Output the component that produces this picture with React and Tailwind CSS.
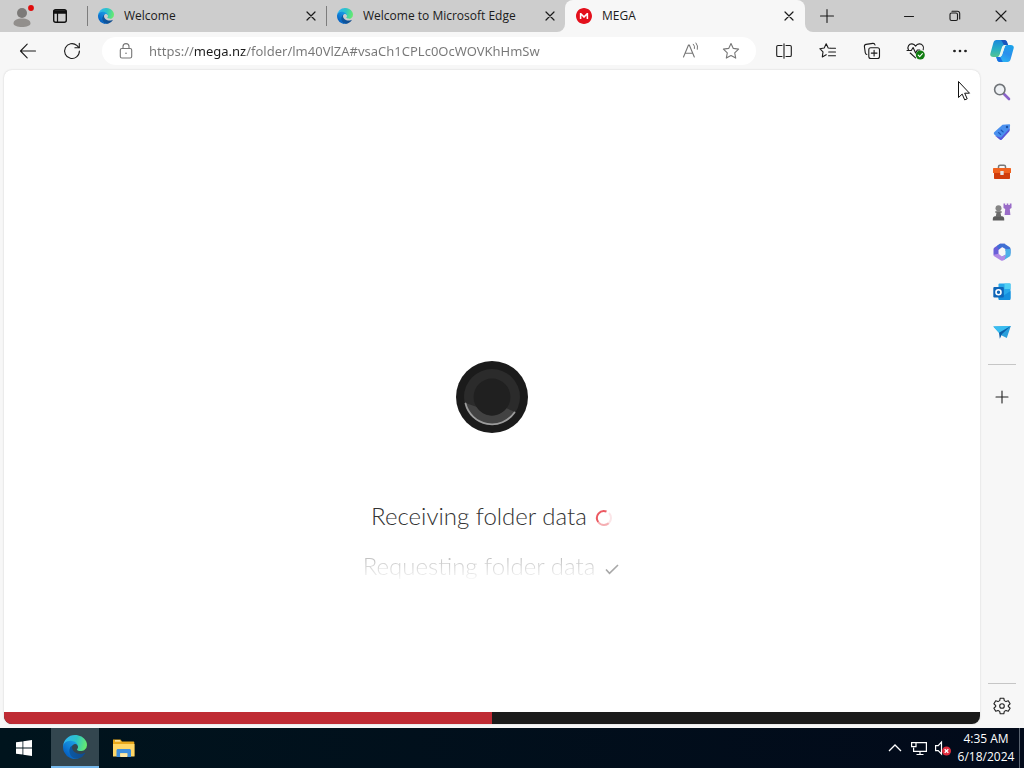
import React from "react";
import { SiMega } from "react-icons/si";

function Icon({ size = "size-5", children, className = "" }) {
  return (
    <svg
      viewBox="0 0 20 20"
      className={`${size} shrink-0 ${className}`}
      fill="none"
      stroke="currentColor"
      strokeWidth="1.1"
      strokeLinecap="round"
      strokeLinejoin="round"
      aria-hidden="true"
    >
      {children}
    </svg>
  );
}

function EdgeLogo({ id, className }) {
  return (
    <svg viewBox="0 0 256 256" className={className} aria-hidden="true">
      <defs>
        <linearGradient id={`${id}-a`} x1="60" y1="177" x2="240" y2="177" gradientUnits="userSpaceOnUse">
          <stop offset="0" stopColor="#0c59a4" />
          <stop offset="1" stopColor="#114a8b" />
        </linearGradient>
        <linearGradient id={`${id}-b`} x1="150" y1="90" x2="45" y2="210" gradientUnits="userSpaceOnUse">
          <stop offset="0" stopColor="#1b9de2" />
          <stop offset="0.5" stopColor="#1283d8" />
          <stop offset="1" stopColor="#0664c4" />
        </linearGradient>
        <linearGradient id={`${id}-c`} x1="20" y1="60" x2="245" y2="120" gradientUnits="userSpaceOnUse">
          <stop offset="0" stopColor="#2fb5ef" />
          <stop offset="0.5" stopColor="#2cc3c8" />
          <stop offset="1" stopColor="#66eb6e" />
        </linearGradient>
      </defs>
      <path fill={`url(#${id}-a)`} d="M231 190.5c-3.4 1.8-6.9 3.4-10.5 4.7a101.5 101.5 0 0 1-35.9 6.5c-47.3 0-88.5-32.5-88.5-74.3a31.5 31.5 0 0 1 16.4-27.3c-42.8 1.8-53.8 46.4-53.8 72.5 0 74 68.1 81.4 82.8 81.4 7.9 0 19.8-2.3 27-4.6l1.3-.4a128.3 128.3 0 0 0 66.6-52.8 4 4 0 0 0-5.4-5.7z" />
      <path fill={`url(#${id}-b)`} d="M105.7 241.4a79.2 79.2 0 0 1-22.7-21.3 80.7 80.7 0 0 1 29.5-120c3.2-1.5 8.5-4.1 15.6-4a32.4 32.4 0 0 1 25.7 13 31.9 31.9 0 0 1 6.3 18.7c0-.2 24.5-79.6-80-79.6-43.9 0-80 41.6-80 78.2a130.2 130.2 0 0 0 12.1 56 128 128 0 0 0 156.4 67.1 75.5 75.5 0 0 1-62.8-8z" />
      <path fill={`url(#${id}-c)`} d="M152.3 148.9c-.9 1-3.4 2.5-3.4 5.6 0 2.6 1.7 5.2 4.8 7.3 14.3 10 41.4 8.6 41.5 8.6a59.6 59.6 0 0 0 30.3-8.3 61.4 61.4 0 0 0 30.4-52.9c.3-22.4-8-37.3-11.3-43.9C223.5 23.9 177.7 0 128 0A128 128 0 0 0 0 126.2c.5-36.5 36.8-66 80-66 3.5 0 23.5.3 42 10a72.6 72.6 0 0 1 30.9 29.3c6.1 10.6 7.2 24.1 7.2 29.5s-2.7 13.3-7.8 19.9z" />
    </svg>
  );
}

function CloseGlyph({ size = "size-3" }) {
  return (
    <svg viewBox="0 0 12 12" className={size} stroke="currentColor" strokeWidth="1.2" strokeLinecap="round" aria-hidden="true">
      <path d="M2 2l8 8M10 2l-8 8" />
    </svg>
  );
}

function Tab({ icon, title, active }) {
  return (
    <div
      className={
        active
          ? "flex h-8 w-full items-center gap-2.5 rounded-t-lg bg-[#f7f7f7] pr-2.5 pl-[11px]"
          : "flex h-8 w-full items-center"
      }
    >
      {!active && <span className="mr-2.5 h-5 w-px shrink-0 bg-[#7d7d7d]" />}
      <button type="button" role="tab" aria-selected={!!active} className="flex min-w-0 flex-1 items-center gap-2.5 text-left">
        {icon}
        <span className="truncate text-[12px] leading-4 text-[#1b1b1b]">{title}</span>
      </button>
      <button type="button" aria-label={`Close ${title}`} className={`flex size-3 items-center justify-center text-[#1b1b1b] ${active ? "" : "mr-[9px]"}`}>
        <CloseGlyph />
      </button>
    </div>
  );
}

function TabStrip() {
  return (
    <header className="flex h-8 shrink-0 bg-[#f7f7f7]">
      <div className="flex min-w-0 flex-1 rounded-br-lg bg-[#cdcdcd]">
        <div className="flex w-[87px] shrink-0 items-center">
          <button type="button" aria-label="Profile" className="ml-3 flex">
            <svg viewBox="0 0 22 24" className="h-6 w-[22px]" aria-hidden="true">
              <circle cx="10" cy="9" r="5" fill="#7c7a78" />
              <path d="M1.5 19.5c0-3.500 3.600-5 8.500-5s8.500 1.500 8.500 5c0 2.200-4 3.500-8.500 3.500s-8.500-1.300-8.500-3.500z" fill="#928f8c" />
              <circle cx="19" cy="4" r="2.900" fill="#e00b0b" />
            </svg>
          </button>
          <button type="button" aria-label="Tab actions" className="ml-4 flex text-[#111]">
            <Icon size="size-5">
              <rect x="3.700" y="3.700" width="12.600" height="12.600" rx="2" strokeWidth="1.400" />
              <path d="M4 4.800h12v2.400H4z" fill="currentColor" strokeWidth="1" />
              <path d="M7.500 7v9" strokeWidth="1.200" />
            </Icon>
          </button>
        </div>
        <div role="tablist" className="flex min-w-0 flex-1">
          <div className="flex min-w-0 flex-1">
            <Tab icon={<EdgeLogo id="t1" className="size-4 shrink-0" />} title="Welcome" />
          </div>
          <div className="flex min-w-0 flex-1">
            <Tab icon={<EdgeLogo id="t2" className="size-4 shrink-0" />} title="Welcome to Microsoft Edge" />
          </div>
        </div>
      </div>
      <div className="flex w-60 shrink-0 bg-[#cdcdcd]">
        <Tab
          active
          title="MEGA"
          icon={
            <span className="flex size-4 shrink-0 items-center justify-center rounded-full bg-white">
              <SiMega className="size-4 text-[#e3101c]" aria-hidden="true" />
            </span>
          }
        />
      </div>
      <div className="flex w-[219px] shrink-0 items-center rounded-bl-lg bg-[#cdcdcd] text-[#1b1b1b]">
        <button type="button" aria-label="New tab" className="ml-3 flex size-5 items-center justify-center">
          <Icon size="size-5"><path d="M10 3.500v13M3.500 10h13" /></Icon>
        </button>
        <div className="ml-auto flex">
          <button type="button" aria-label="Minimize" className="flex h-8 w-[46px] items-center justify-center">
            <Icon><path d="M5.500 10.500h9" /></Icon>
          </button>
          <button type="button" aria-label="Restore" className="flex h-8 w-[46px] items-center justify-center">
            <Icon>
              <rect x="5" y="7" width="7.500" height="7.500" rx="1.500" />
              <path d="M7 5.200h5.500a2.200 2.200 0 0 1 2.200 2.200V13" />
            </Icon>
          </button>
          <button type="button" aria-label="Close window" className="flex h-8 w-[46px] items-center justify-center">
            <Icon><path d="M5 5l10 10M15 5L5 15" /></Icon>
          </button>
        </div>
      </div>
    </header>
  );
}

function ToolButton({ label, children }) {
  return (
    <button type="button" aria-label={label} className="flex h-8 w-11 shrink-0 items-center justify-center text-[#1b1b1b]">
      {children}
    </button>
  );
}

function CopilotLogo() {
  return (
    <svg viewBox="0 0 24 24" className="size-6" aria-hidden="true">
      <defs>
        <linearGradient id="cp1" x1="6" y1="1" x2="6" y2="19" gradientUnits="userSpaceOnUse">
          <stop offset="0" stopColor="#1a86dc" />
          <stop offset="0.5" stopColor="#27aec4" />
          <stop offset="1" stopColor="#5bc88c" />
        </linearGradient>
        <linearGradient id="cp2" x1="20" y1="6" x2="12" y2="23" gradientUnits="userSpaceOnUse">
          <stop offset="0" stopColor="#1ba3ea" />
          <stop offset="0.5" stopColor="#2a8fec" />
          <stop offset="1" stopColor="#2bb7f2" />
        </linearGradient>
      </defs>
      <path d="M6.500 1H14c1.700 0 2.600 1.200 3 2.500L17.800 6h-2.600c-1.800 0-2.800 1-3.300 2.600l-2.200 6.800C9.200 17 8.300 18 6.500 18H3.200C.8 18-.2 16.600.4 14.400L3.300 4C3.800 2.200 4.800 1 6.500 1z" fill="url(#cp1)" />
      <path d="M11 1h3.500c1.500 0 2.400 1 2.800 2.400L18.100 6h-3.600C13.300 6 12.500 2.500 11 1z" fill="#1a55bd" />
      <path d="M17.500 23H10c-1.700 0-2.600-1.200-3-2.500L6.200 18h2.600c1.800 0 2.800-1 3.300-2.600l2.200-6.800C14.800 7 15.700 6 17.500 6h3.300c2.400 0 3.400 1.400 2.800 3.600L20.700 20c-.5 1.800-1.500 3-3.200 3z" fill="url(#cp2)" />
      <path d="M13 23h-3.300c-1.500 0-2.300-1-2.700-2.400L6.200 18h3.500c1.400 0 2.100 4 3.300 5z" fill="#1a6fe0" />
      <path d="M12.300 9c.5-1.800 1.400-3 3.200-3l-3.300 9.500c-.5 1.600-1.700 2.500-3.500 2.500.9-.3 1.200-1.200 1.500-2.200z" fill="#e6f7ee" />
    </svg>
  );
}

function Toolbar() {
  return (
    <div className="flex h-[38px] shrink-0 items-center bg-[#f7f7f7]">
      <nav className="flex w-[102px] shrink-0 items-center pl-[6px]">
        <ToolButton label="Back">
          <Icon><path d="M17.500 10h-15M9.200 3.200L2.500 10l6.700 6.800" /></Icon>
        </ToolButton>
        <ToolButton label="Refresh">
          <Icon>
            <path d="M17.400 10a7.400 7.400 0 1 1-2.600-5.600L17 6.600" />
            <path d="M17.300 2.300v4.400h-4.400" />
          </Icon>
        </ToolButton>
      </nav>
      <div className="flex h-7 min-w-0 flex-1 items-center rounded-full bg-white text-[#767676]">
        <button type="button" aria-label="Site information" className="ml-3.5 flex">
          <Icon>
            <rect x="4.300" y="7.500" width="11.400" height="9.500" rx="1.600" />
            <path d="M7 7.500V5.600a3 3 0 0 1 6 0v1.900" />
            <circle cx="10" cy="12.300" r=".8" fill="currentColor" stroke="none" />
          </Icon>
        </button>
        <input
          type="text"
          aria-label="Address"
          readOnly
          value="https://mega.nz/folder/lm40VlZA#vsaCh1CPLc0OcWOVKhHmSw"
          className="ml-[13px] h-7 min-w-0 flex-1 bg-[linear-gradient(to_right,#767676_46px,#1b1b1b_46px,#1b1b1b_97px,#767676_97px)] bg-clip-text font-['Noto_Sans','Open_Sans',sans-serif] text-[13px] leading-7 text-transparent outline-none"
        />
        <button type="button" aria-label="Read aloud" className="ml-3 flex">
          <Icon>
            <path d="M2.500 16L7.500 4h.8l5 12M4.300 12.200h7.300" />
            <path d="M12.300 3.200a4.500 4.500 0 0 1 1.200 4.300M15 2a7 7 0 0 1 1.400 6.300" strokeWidth="1" />
          </Icon>
        </button>
        <button type="button" aria-label="Add to favorites" className="mr-[15px] ml-5 flex">
          <Icon><path d="M10 2.500l2.300 4.900 5.300.7-3.900 3.700 1 5.300L10 14.500l-4.700 2.600 1-5.300-3.900-3.700 5.300-.7z" /></Icon>
        </button>
      </div>
      <div className="flex shrink-0 items-center pl-[6px]">
        <ToolButton label="Split screen">
          <Icon>
            <path d="M8 4.500H4A1.300 1.300 0 0 0 2.700 5.800v8.400A1.300 1.300 0 0 0 4 15.500h4M12 4.500h4a1.300 1.300 0 0 1 1.300 1.300v8.400a1.300 1.300 0 0 1-1.300 1.300h-4M10 2.800v14.400" />
          </Icon>
        </ToolButton>
        <ToolButton label="Favorites">
          <Icon>
            <path d="M12.300 7.300L10.200 7 8.200 2.800 6.200 7l-4.400.7 3.200 3.200-.7 5 3.900-2.200M12.500 7.300h5M10.700 11h6.800M10.500 14.700h7" />
          </Icon>
        </ToolButton>
        <ToolButton label="Collections">
          <Icon>
            <rect x="6.800" y="6.800" width="10.700" height="10.700" rx="2" />
            <path d="M12.100 9.300v5.700M9.300 12.100H15M4.800 13.500a2 2 0 0 1-1.500-1.700L2.400 5.600a2 2 0 0 1 1.700-2.200l6.700-1a2 2 0 0 1 2.200 1.600" />
          </Icon>
        </ToolButton>
        <ToolButton label="Browser essentials">
          <Icon>
            <path d="M2.500 9C.8 5.700 3.200 2.700 6 2.900c1.600.1 2.800 1 3.600 2.200.8-1.200 2-2.100 3.600-2.200 2.800-.2 5.300 2.500 4 5.800M1 9.500h4.300l1.800-3 2.500 5.500 1.700-3h2.500M4.200 12l5.300 4.800" />
            <circle cx="14.300" cy="14" r="4.500" fill="#107c10" stroke="none" />
            <path d="M12.200 14.100l1.500 1.500 2.700-2.900" stroke="#fff" />
          </Icon>
        </ToolButton>
        <ToolButton label="Settings and more">
          <Icon className="fill-current">
            <circle cx="4.500" cy="10" r=".8" />
            <circle cx="10" cy="10" r=".8" />
            <circle cx="15.500" cy="10" r=".8" />
          </Icon>
        </ToolButton>
        <button type="button" aria-label="Copilot" className="mr-0.5 flex h-8 w-10 items-center justify-center">
          <CopilotLogo />
        </button>
      </div>
    </div>
  );
}

const sideApps = [
  {
    label: "Search",
    art: (
      <>
        <path d="M12 12l5 5" stroke="#8a63c9" strokeWidth="2.600" />
        <circle cx="7.800" cy="7.600" r="5.200" fill="#eef1f4" stroke="#707478" strokeWidth="1.600" />
      </>
    ),
  },
  {
    label: "Shopping",
    art: (
      <>
        <path d="M10.500 2.800l6.600-.6c.6 0 1 .4 1 1l-.7 5.600-7.300 8.500c-.6.700-1.400.8-2.100.2l-5.700-5.100c-.6-.6-.7-1.400-.1-2.100z" fill="#4a90ee" stroke="none" />
        <path d="M3 13.800l5 4c.6.400 1.200.3 1.700-.2l7.700-8.400.4-3L9 15.800z" fill="#5b55d6" stroke="none" />
        <circle cx="15" cy="5" r="1.200" fill="#1c4fa0" stroke="none" />
        <path d="M6.500 10.500l2.200 2M9 8l2.200 2" stroke="#1d57b8" />
      </>
    ),
  },
  {
    label: "Tools",
    art: (
      <>
        <path d="M6.500 6.500V4.800c0-.9.600-1.500 1.500-1.500h4c.9 0 1.500.600 1.500 1.500v1.700" stroke="#777" strokeWidth="1.500" />
        <path d="M2 6h16c.6 0 1 .4 1 1v4H1V7c0-.6.400-1 1-1z" fill="#f0621f" stroke="none" />
        <path d="M2 11h16v5c0 .6-.4 1-1 1H3c-.6 0-1-.4-1-1z" fill="#d03d0c" stroke="none" />
        <rect x="8.300" y="9" width="3.400" height="4" rx=".6" fill="#e4e4e4" stroke="none" />
      </>
    ),
  },
  {
    label: "Games",
    art: (
      <>
        <path d="M11.500 1.500h1.700v1.400h1.500V1.500h1.600v1.400h1.500V1.500h1.700v4.500l-1.700 1 .6 6h-5.800l.6-6-1.700-1z" fill="#9a6cc8" stroke="none" />
        <circle cx="6.500" cy="6.300" r="3" fill="#858585" stroke="none" />
        <path d="M3.300 9.200h6.400v1.500H8.500l.8 4H3.700l.8-4H3.300z" fill="#6b6b6b" stroke="none" />
        <path d="M.8 17c0-1.700 1-2.700 2.200-2.700h7c1.200 0 2.200 1 2.200 2.700v1.500H.8z" fill="#5c5c5c" stroke="none" />
      </>
    ),
  },
  {
    label: "Microsoft 365",
    art: (
      <>
        <path d="M8 1.800h5.300L9.500 5.500 6.500 8v5.500L2.300 14a2 2 0 0 1-.8-1.800V7.300c0-.8.400-1.500 1-1.900z" fill="#6a5fd8" stroke="none" />
        <path d="M8 1.800h4.500l5 3.200c.6.400 1 1 1 1.700v5L13.500 8.800V7L10 5 6.500 7.300 5 4z" fill="#3f6fd4" stroke="none" />
        <path d="M18.600 7v5.800c0 .7-.4 1.400-1 1.800l-6 3.600-2-3.400 3.900-2.300V7.200z" fill="#4bb0e8" stroke="none" />
        <path d="M1.600 12.700l4.900-.9 3.500 2.700 4-1.800-1.500 5-1.500.8a2 2 0 0 1-2 0l-6.400-3.900c-.6-.4-1-1-1-1.900z" fill="#b18ae6" stroke="none" />
      </>
    ),
  },
  {
    label: "Outlook",
    art: (
      <>
        <rect x="6.500" y="1.500" width="12" height="15.500" rx="1" fill="#28a8ea" stroke="none" />
        <path d="M12.500 1.500h6v5.500h-6z" fill="#50d0f4" stroke="none" />
        <path d="M6.500 9l6 4 6-4v8c0 .6-.4 1-1 1h-10c-.6 0-1-.4-1-1z" fill="#1490df" stroke="none" />
        <rect x="1.300" y="5" width="10.500" height="10.500" rx="1" fill="#0f65b8" stroke="none" />
        <circle cx="6.500" cy="10.200" r="2.500" stroke="#fff" strokeWidth="1.600" />
      </>
    ),
  },
  {
    label: "Drop",
    art: (
      <>
        <path d="M1.300 4.500L18.800 4l-4 12-5-2.500z" fill="#2a9fdc" stroke="none" />
        <path d="M1.300 4.500L18.800 4 7 11z" fill="#39bdf0" stroke="none" />
        <path d="M7 10.800L18.800 4 10 12l-2.200 4.800z" fill="#0b5fa8" stroke="none" />
      </>
    ),
  },
];

function Sidebar() {
  return (
    <aside className="flex w-11 shrink-0 flex-col items-center pt-0.5 pb-[2px]">
      {sideApps.map((app) => (
        <button key={app.label} type="button" aria-label={app.label} className="flex h-10 w-11 items-center justify-center">
          <Icon size="size-5">{app.art}</Icon>
        </button>
      ))}
      <span className="my-3 h-px w-7 bg-[#c6c6c6]" />
      <button type="button" aria-label="Customize sidebar" className="flex h-10 w-11 items-center justify-center text-[#222]">
        <Icon size="size-5"><path d="M10 4v12M4 10h12" /></Icon>
      </button>
      <span className="mt-auto mb-0.5 h-px w-7 bg-[#c6c6c6]" />
      <button type="button" aria-label="Sidebar settings" className="flex h-10 w-11 items-center justify-center text-[#222]">
        <Icon size="size-5">
          <path d="M8.200 2.200h3.600l.5 2.400 1.700 1 2.300-.8 1.800 3.100L16.300 9.500v1l1.800 1.600-1.800 3.100-2.300-.8-1.700 1-.5 2.400H8.200l-.5-2.400-1.700-1-2.300.8-1.800-3.100 1.800-1.600v-1L1.900 7.900l1.800-3.100 2.300.8 1.700-1z" />
          <circle cx="10" cy="10" r="2.300" />
        </Icon>
      </button>
    </aside>
  );
}

function LoadingDial() {
  return (
    <svg viewBox="0 0 72 72" className="size-[72px] shrink-0" role="img" aria-label="Loading">
      <circle cx="36" cy="36" r="36" fill="#1b1b1b" />
      <circle cx="36" cy="36" r="28" fill="#2b2b2b" />
      <path d="M9.500 42A27.200 27.200 0 0 0 59 51l-9-4a17 17 0 0 1-29-1z" fill="#424242" />
      <circle cx="36" cy="36" r="18.500" fill="#202020" />
      <path d="M9.500 42.500A27.300 27.300 0 0 0 58.500 51.500" fill="none" stroke="#9c9c9c" strokeWidth="1.800" strokeLinecap="round" />
    </svg>
  );
}

function PageContent() {
  return (
    <main className="relative flex min-w-0 flex-1 flex-col items-center overflow-hidden rounded-lg bg-white shadow-[0_0_2px_rgba(0,0,0,0.18)]">
      <div className="flex-1 basis-0" />
      <LoadingDial />
      <div className="flex w-full flex-1 basis-0 flex-col items-center">
        <div className="mt-[58px] flex flex-col items-center font-['Lato','Open_Sans',sans-serif] text-[24px] font-light">
          <p className="flex h-[50px] items-center gap-2 text-[#333]">
            Receiving folder data
            <svg viewBox="0 0 18 18" className="mt-1 size-[18px]" fill="none" strokeWidth="2" aria-hidden="true">
              <path d="M9 16a7 7 0 0 0 7-7c0-2-.8-3.700-2-5" stroke="#fbe6e8" />
              <path d="M3.200 13A7 7 0 0 0 9 16c1.800 0 3.400-.6 4.600-1.700" stroke="#f5aeb2" />
              <path d="M11.500 2.500A7 7 0 0 0 3.200 13" stroke="#ec5a62" />
            </svg>
          </p>
          <p className="flex h-[50px] items-center gap-2 bg-linear-to-b from-[#bdbdbd] from-30% to-[#f4f4f4] to-75% bg-clip-text text-transparent">
            Requesting folder data
            <svg viewBox="0 0 18 18" className="mt-1.5 size-[18px]" fill="none" stroke="#a8a8a8" strokeWidth="1.600" aria-hidden="true">
              <path d="M3 9.500l3.500 3.800L15 5" />
            </svg>
          </p>
        </div>
        <div className="mt-auto flex h-3 w-full bg-[#1b1b1b]" role="progressbar" aria-valuenow={50} aria-valuemin={0} aria-valuemax={100} aria-label="Folder loading">
          <div className="w-1/2 bg-[#bf2b34]" />
        </div>
      </div>
      <svg viewBox="0 0 14 22" className="absolute top-[10px] right-[9px] h-[22px] w-3.5" aria-hidden="true">
        <path d="M1.500 1.500v16l3.700-3.400 2.500 5.800 2.500-1.100-2.500-5.600h4.800z" fill="#fff" stroke="#111" strokeWidth="1" />
      </svg>
    </main>
  );
}

function Taskbar() {
  return (
    <footer className="flex h-10 shrink-0 items-stretch bg-linear-to-r from-[#00141d] to-[#020a1a] pl-[1px] text-white">
      <button type="button" aria-label="Start" className="flex w-[50px] items-center justify-center pr-1">
        <svg viewBox="0 0 16 16" className="size-4 fill-white" aria-hidden="true">
          <path d="M0 2.300l6.500-.9v6.200H0zM7.300 1.300L16 0v7.600H7.300zM0 8.400h6.500v6.200L0 13.700zM7.300 8.400H16V16l-8.700-1.300z" />
        </svg>
      </button>
      <button type="button" aria-label="Microsoft Edge" className="flex w-12 items-center justify-center border-b-2 border-[#76b9ed] bg-[#33464f]">
        <EdgeLogo id="tb" className="size-6" />
      </button>
      <button type="button" aria-label="File Explorer" className="flex w-[50px] items-center justify-center">
        <svg viewBox="0 0 24 20" className="h-5 w-6" aria-hidden="true">
          <path d="M1 1.500h7.500l1.500 2h11.500c.5 0 .8.300.8.800V18H1z" fill="#e8a81c" />
          <path d="M3 2.200h4.800l1 1.300H3z" fill="#fff3c4" />
          <path d="M1 6h21.500v12.500H1z" fill="#ffd766" />
          <path d="M4.500 19v-6.500c0-.8.600-1.500 1.500-1.500h11.500c.9 0 1.500.7 1.500 1.500V19h-3.700v-3.700H8.200V19z" fill="#3f8fdc" />
          <path d="M8.200 15.300h7.100V19H8.200z" fill="#ffe9a6" />
        </svg>
      </button>
      <div className="ml-auto flex items-center">
        <button type="button" aria-label="Show hidden icons" className="flex w-5 justify-center">
          <svg viewBox="0 0 14 8" className="h-2 w-3.5" fill="none" stroke="#fff" strokeWidth="1.300" aria-hidden="true"><path d="M1 7l6-6 6 6" /></svg>
        </button>
        <button type="button" aria-label="Network" className="ml-1 flex w-5 justify-center">
          <svg viewBox="0 0 18 16" className="h-4 w-[18px]" fill="none" stroke="#fff" strokeWidth="1.200" aria-hidden="true">
            <path d="M6 2.600h10.400v8.800H3.600V7.500M10 11.500v3M6.500 14.500h7" />
            <path d="M1.600 2.600h4.400v4H1.600z" />
          </svg>
        </button>
        <button type="button" aria-label="Volume muted" className="ml-1 flex w-5 justify-center">
          <svg viewBox="0 0 18 16" className="h-4 w-[18px]" aria-hidden="true">
            <path d="M1.600 5.600h2.600L7.500 2v12L4.200 10.600H1.600z" fill="none" stroke="#fff" strokeWidth="1.200" />
            <circle cx="12.500" cy="11" r="4.500" fill="#e02b3c" />
            <path d="M10.700 9.200l3.600 3.600M14.300 9.200l-3.600 3.600" stroke="#fff" strokeWidth="1.300" />
          </svg>
        </button>
        <button type="button" className="ml-1 flex w-[58px] flex-col items-center text-[12px] leading-[18px] whitespace-nowrap">
          <time>4:35 AM</time>
          <time>6/18/2024</time>
        </button>
        <span className="ml-1 h-10 w-px bg-[#5a6370]" />
        <button type="button" aria-label="Show desktop" className="h-10 w-1" />
      </div>
    </footer>
  );
}

export default function App() {
  return (
    <div className="flex h-screen flex-col overflow-hidden bg-[#f7f7f7] font-['Open_Sans','Noto_Sans',sans-serif]">
      <TabStrip />
      <Toolbar />
      <div className="flex min-h-0 flex-1">
        <div className="flex min-w-0 flex-1 pb-1 pl-1">
          <PageContent />
        </div>
        <Sidebar />
      </div>
      <Taskbar />
    </div>
  );
}
